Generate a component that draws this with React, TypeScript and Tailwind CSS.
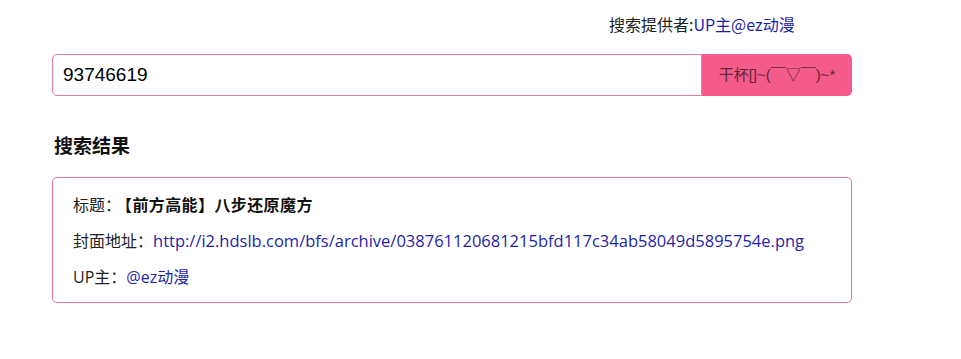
import React from "react";

export default function App() {
  return (
    <div
      className="w-[961px] h-[359px] bg-white text-[#222]"
      style={{ fontFamily: '"Liberation Sans", "Noto Sans CJK SC", sans-serif' }}
    >
      <div className="pt-[14px] pl-[609px] text-[16px] leading-[20px] font-['Noto_Sans_CJK_SC',sans-serif]">
        搜索提供者:<span className="text-[#1f1fa8]">UP主@ez动漫</span>
      </div>
      <div className="mt-[20px] ml-[52px] w-[800px] h-[42px] flex">
        <div className="flex-1 border border-[#e87aa6] rounded-l-[5px] flex items-center pl-[10px] text-[19px] text-black">
          93746619
        </div>
        <div className="w-[150px] bg-[#f45b8b] rounded-r-[5px] flex items-center justify-center text-[15px] text-[#5e2538]">
          干杯[]~(￣▽￣)~*
        </div>
      </div>
      <div className="mt-[39px] ml-[54px] text-[19px] font-bold leading-[24px] text-[#111]">搜索结果</div>
      <div className="mt-[18px] ml-[52px] w-[800px] h-[126px] border border-[#e0709f] rounded-[5px] px-[20px] pt-[17px] text-[16px] font-['Open_Sans','Noto_Sans_CJK_SC',sans-serif]">
        <div className="leading-[20px]">
          标题：<span className="ml-[3px] font-bold text-[#111] tracking-[0.4px]">【前方高能】八步还原魔方</span>
        </div>
        <div className="leading-[20px] mt-[16px]">
          封面地址：
          <span className="text-[#1f1fa8] text-[16.5px]">
            http://i2.hdslb.com/bfs/archive/038761120681215bfd117c34ab58049d5895754e.png
          </span>
        </div>
        <div className="leading-[20px] mt-[16px]">
          UP主：<span className="text-[#1f1fa8]">@ez动漫</span>
        </div>
      </div>
    </div>
  );
}
